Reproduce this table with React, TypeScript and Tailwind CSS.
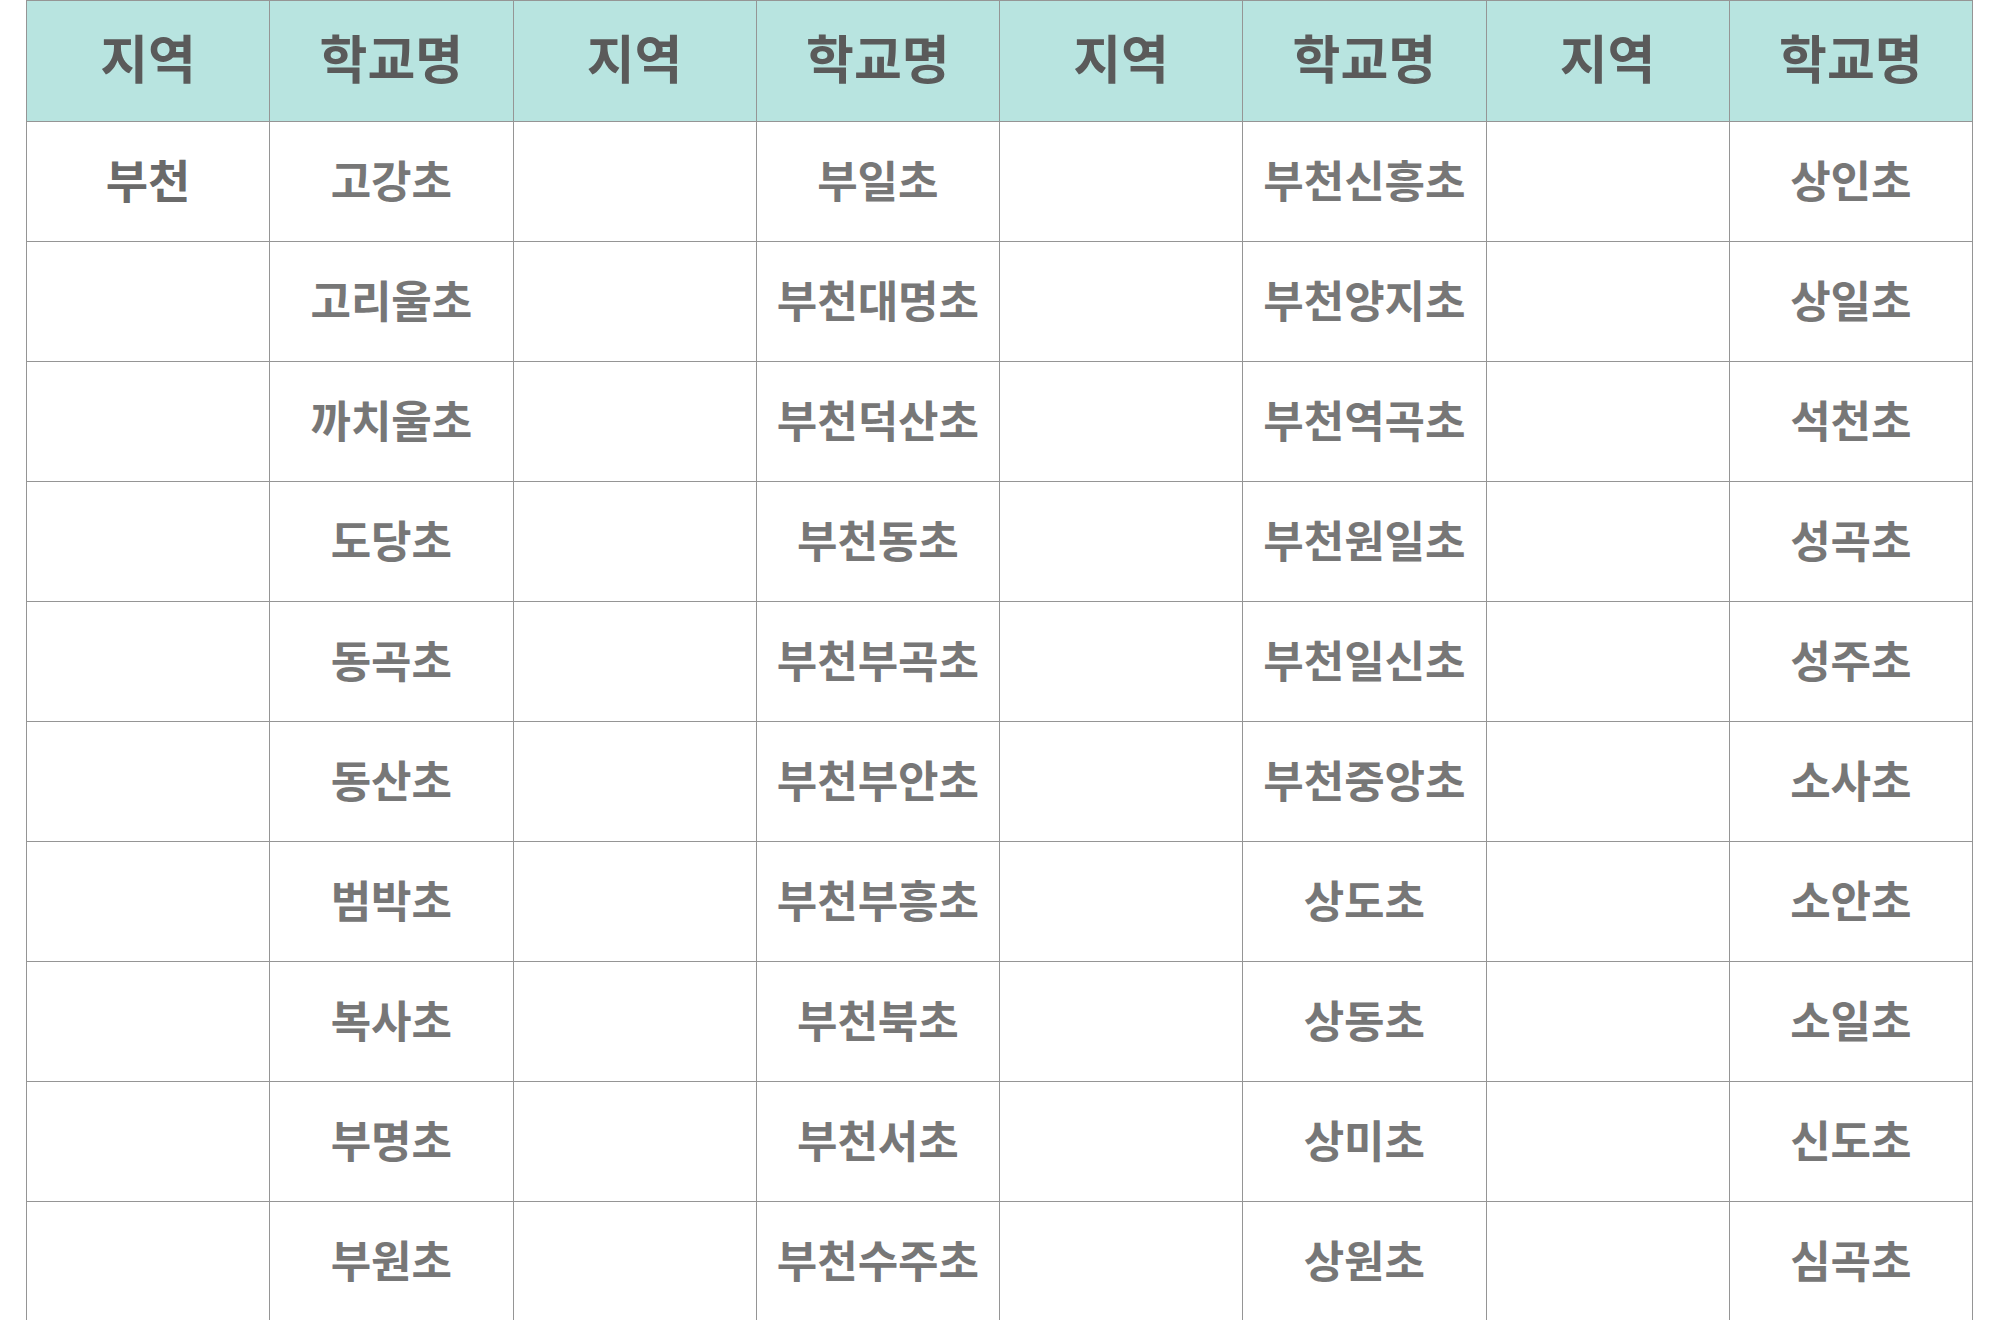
const headers = ["지역", "학교명", "지역", "학교명", "지역", "학교명", "지역", "학교명"];

const cols: string[][] = [
  ["고강초", "고리울초", "까치울초", "도당초", "동곡초", "동산초", "범박초", "복사초", "부명초", "부원초"],
  ["부일초", "부천대명초", "부천덕산초", "부천동초", "부천부곡초", "부천부안초", "부천부흥초", "부천북초", "부천서초", "부천수주초"],
  ["부천신흥초", "부천양지초", "부천역곡초", "부천원일초", "부천일신초", "부천중앙초", "상도초", "상동초", "상미초", "상원초"],
  ["상인초", "상일초", "석천초", "성곡초", "성주초", "소사초", "소안초", "소일초", "신도초", "심곡초"],
];

const App = () => {
  return (
    <div className="w-[2000px] h-[1320px] overflow-hidden bg-white" style={{ fontFamily: '"Noto Sans CJK KR", "Noto Sans", sans-serif' }}>
      <table className="ml-[26px] w-[1947px] table-fixed border-collapse">
        <thead>
          <tr className="h-[121px] bg-[#b8e4e0]">
            {headers.map((h, i) => (
              <th key={i} className="border border-[#959595] pb-[8px] text-[52px] font-bold text-[#5a5a5a] text-center">
                {h}
              </th>
            ))}
          </tr>
        </thead>
        <tbody>
          {cols[0].map((_, r) => (
            <tr key={r} className="h-[120px]">
              {cols.map((c, j) => (
                <>
                  <td key={"a" + j} className="border border-[#959595] pb-[6px] text-[46px] font-bold text-[#6a6a6a] text-center">
                    {r === 0 && j === 0 ? "부천" : ""}
                  </td>
                  <td key={"b" + j} className="border border-[#959595] pb-[6px] text-[44px] font-bold text-[#777] text-center">
                    {c[r]}
                  </td>
                </>
              ))}
            </tr>
          ))}
        </tbody>
      </table>
    </div>
  );
};

export default App;
